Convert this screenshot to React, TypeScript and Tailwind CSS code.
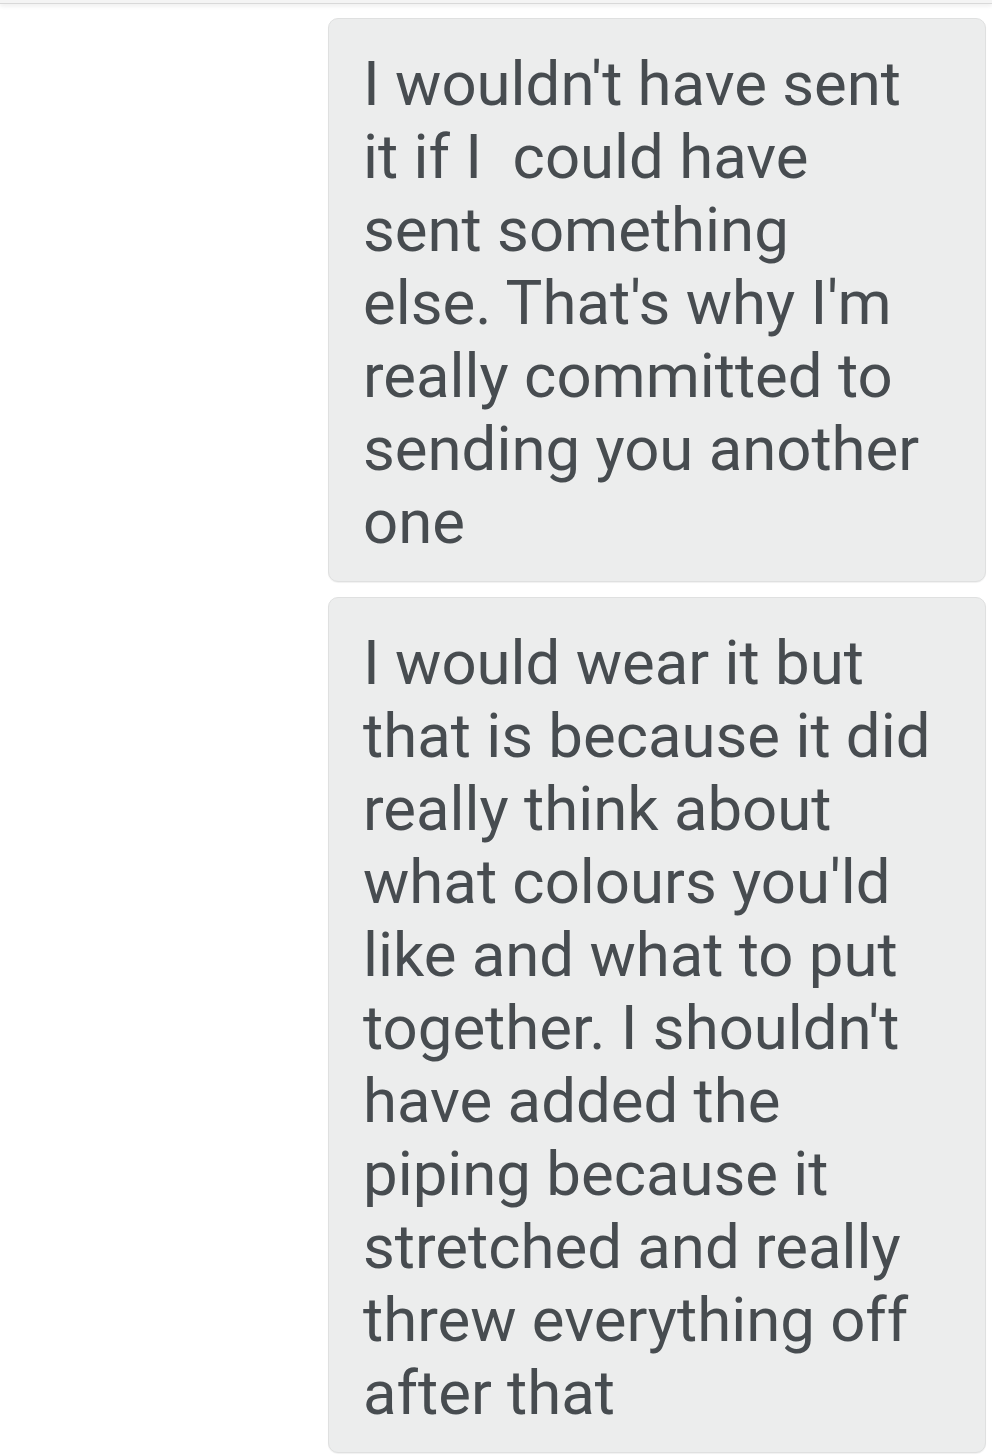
const messages = [
  "I wouldn't have sent it if I  could have sent something\nelse. That's why I'm really committed to sending you another one",
  "I would wear it but that is because it did really think about what colours you'ld like and what to put together. I shouldn't have added the piping because it stretched and really threw everything off after that",
];

export default function App() {
  return (
    <div className="min-h-[1456px] w-[992px] bg-white font-['Roboto','Liberation_Sans',sans-serif]">
      {/* header edge */}
      <div className="h-[4px] bg-[#f4f4f4] border-b border-[#d9d9d9] shadow-[0_2px_4px_rgba(0,0,0,0.08)]" />

      <div className="flex flex-col items-end gap-[15px] pt-[14px] pr-[6px]">
        {messages.map((text, i) => (
          <div
            key={i}
            className="w-[658px] rounded-[10px] border border-[#dfe0e0] bg-[#eceded] pl-[34px] pr-[52px] pt-[29px] pb-[22px] shadow-[0_1px_1px_rgba(0,0,0,0.06)]"
          >
            <p className="whitespace-pre-wrap text-[61.7px] leading-[73px] text-[#474c50]">
              {text}
            </p>
          </div>
        ))}
      </div>
    </div>
  );
}
